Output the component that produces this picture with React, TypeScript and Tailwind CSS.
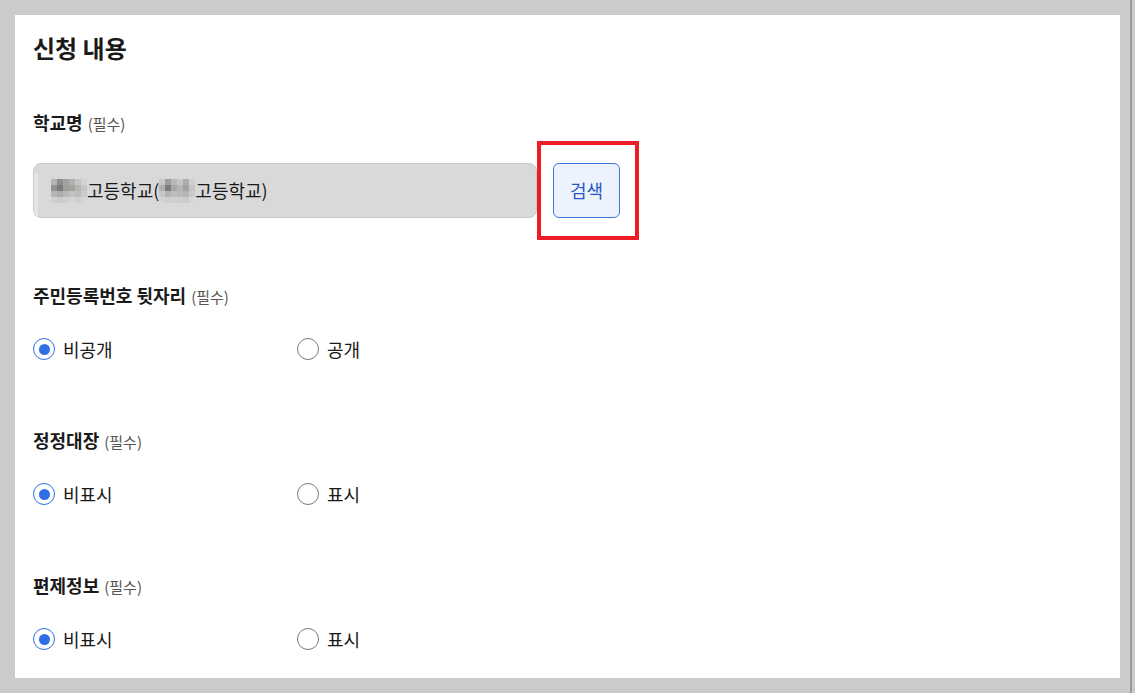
import React from "react";

const font = { fontFamily: '"Noto Sans CJK KR", "Noto Sans", sans-serif' };

// blurred (mosaic) part of the school name
const mosaicA = [
  ["#b4b4b4", "#8e8e8e", "#a2a2a2", "#b5afa9", "#c4c4c4", "#d2d2d2"],
  ["#929292", "#7c7c7c", "#9f9f9f", "#a8a29c", "#b6b6b6", "#c6c6c6"],
  ["#b6b6b6", "#adadad", "#b9b9b9", "#c3c3c3", "#bdbdbd", "#cccccc"],
  ["#d0d0d0", "#cbcbcb", "#cfcfcf", "#d4d4d4", "#cecece", "#d6d6d6"],
];
const mosaicB = [
  ["#c8c8c8", "#9d9d9d", "#b9b9b9", "#c6c6c6", "#adadad", "#d0d0d0"],
  ["#b1b1b1", "#7d7d7d", "#a8a8a8", "#b6b6b6", "#a2a2a2", "#c4c4c4"],
  ["#c6c6c6", "#b3b3b3", "#bebebe", "#bababa", "#b6b6b6", "#cbcbcb"],
  ["#d4d4d4", "#cecece", "#d0d0d0", "#cecece", "#cbcbcb", "#d6d6d6"],
];

function Mosaic({ cells }: { cells: string[][] }) {
  return (
    <span className="inline-flex flex-col">
      {cells.map((row, i) => (
        <span key={i} className="flex">
          {row.map((c, j) => (
            <span key={j} className="block w-[6px] h-[6px]" style={{ backgroundColor: c }} />
          ))}
        </span>
      ))}
    </span>
  );
}

function Label({ text }: { text: string }) {
  return (
    <div className="flex items-baseline gap-[5px] leading-[24px]">
      <span className="text-[18px] font-bold text-[#1a1a1a]">{text}</span>
      <span className="text-[15px] text-[#555]">(필수)</span>
    </div>
  );
}

function Radio({ label, checked }: { label: string; checked?: boolean }) {
  return (
    <div className="flex items-center gap-[8px] w-[264px] h-[24px]">
      {checked ? (
        <span className="w-[22px] h-[22px] rounded-full border-[1.5px] border-[#2f6fe4] flex items-center justify-center">
          <span className="w-[11px] h-[11px] rounded-full bg-[#2f6fe4]" />
        </span>
      ) : (
        <span className="w-[22px] h-[22px] rounded-full border-[1.5px] border-[#7a7a7a]" />
      )}
      <span className="text-[18px] text-[#1a1a1a]">{label}</span>
    </div>
  );
}

function RadioSection({ title, first, second, top }: { title: string; first: string; second: string; top: string }) {
  return (
    <div className={top}>
      <Label text={title} />
      <div className="flex mt-[28px]">
        <Radio label={first} checked />
        <Radio label={second} />
      </div>
    </div>
  );
}

export default function App() {
  return (
    <div className="relative w-[1135px] h-[693px] bg-[#cbcbcb] overflow-hidden" style={font}>
      <div className="absolute top-0 right-[3px] w-[40px] h-[704px] border-r-2 border-b-2 border-[#9a9a9a] rounded-br-[14px]" />
      <div className="relative ml-[15px] pt-[15px]">
        <div className="w-[1105px] h-[663px] bg-white pl-[18px] pt-[17px]">
          <h1 className="text-[24px] leading-[32px] font-bold text-[#1a1a1a]">신청 내용</h1>

          <div className="mt-[46px]">
            <Label text="학교명" />
            <div className="flex items-center gap-[16px] mt-[27px]">
              <div className="relative w-[504px] h-[55px] bg-[#d9d9d9] border border-[#c9c9c9] rounded-[8px] flex items-center pl-[17px] text-[18px] text-[#1a1a1a]">
                <span className="absolute left-0 top-[9px] w-[4px] h-[43px] bg-[#e4e4e4]" />
                <Mosaic cells={mosaicA} />
                <span>고등학교(</span>
                <Mosaic cells={mosaicB} />
                <span>고등학교)</span>
              </div>
              <div className="relative">
                <button className="w-[67px] h-[55px] bg-[#edf3fd] border border-[#3b76dd] rounded-[6px] text-[18px] text-[#2557c4]">
                  검색
                </button>
                <div className="absolute left-[-16px] top-[-22px] w-[102px] h-[99px] border-[4px] border-[#ee1c25]" />
              </div>
            </div>
          </div>

          <RadioSection top="mt-[65px]" title="주민등록번호 뒷자리" first="비공개" second="공개" />
          <RadioSection top="mt-[67px]" title="정정대장" first="비표시" second="표시" />
          <RadioSection top="mt-[67px]" title="편제정보" first="비표시" second="표시" />
        </div>
      </div>
    </div>
  );
}
